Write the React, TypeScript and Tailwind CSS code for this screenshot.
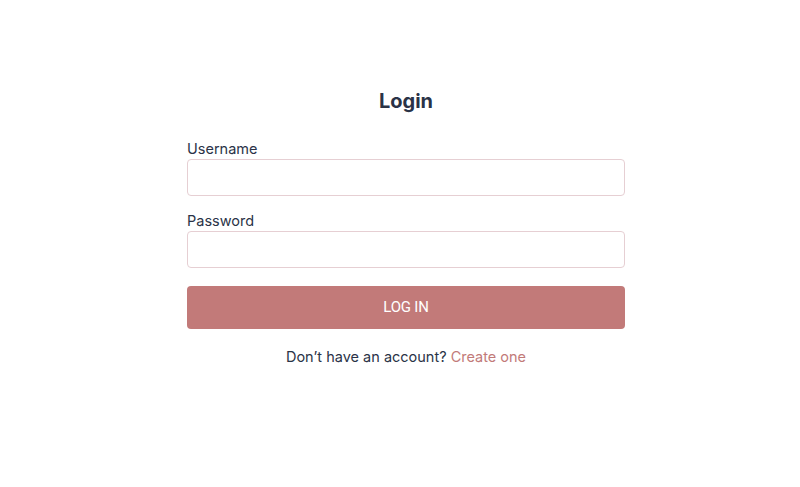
import React from "react";

export default function App() {
  return (
    <div className="min-h-screen bg-white flex justify-center pl-3 font-['Inter',sans-serif] text-[#2a3347]">
      <form className="w-[438px] mt-[88px] flex flex-col" onSubmit={(e) => e.preventDefault()}>
        <h1 className="text-center text-[20px] leading-[26px] font-bold mb-[26px]">Login</h1>

        <label className="text-[14.5px] leading-[18px] mb-[1px]">Username</label>
        <input className="h-[37px] border border-[#e6cfd3] rounded-[4px] px-3 outline-none mb-[16px]" />

        <label className="text-[14.5px] leading-[18px] mb-[1px]">Password</label>
        <input type="password" className="h-[37px] border border-[#e6cfd3] rounded-[4px] px-3 outline-none mb-[18px]" />

        <button className="h-[43px] rounded-[4px] bg-[#c27a79] text-white text-[15px] font-['Roboto',sans-serif] tracking-[-0.2px]">
          LOG IN
        </button>

        <p className="text-center text-[14.5px] mt-[17px]">
          Don’t have an account? <a href="#" className="text-[#c27a79]">Create one</a>
        </p>
      </form>
    </div>
  );
}
